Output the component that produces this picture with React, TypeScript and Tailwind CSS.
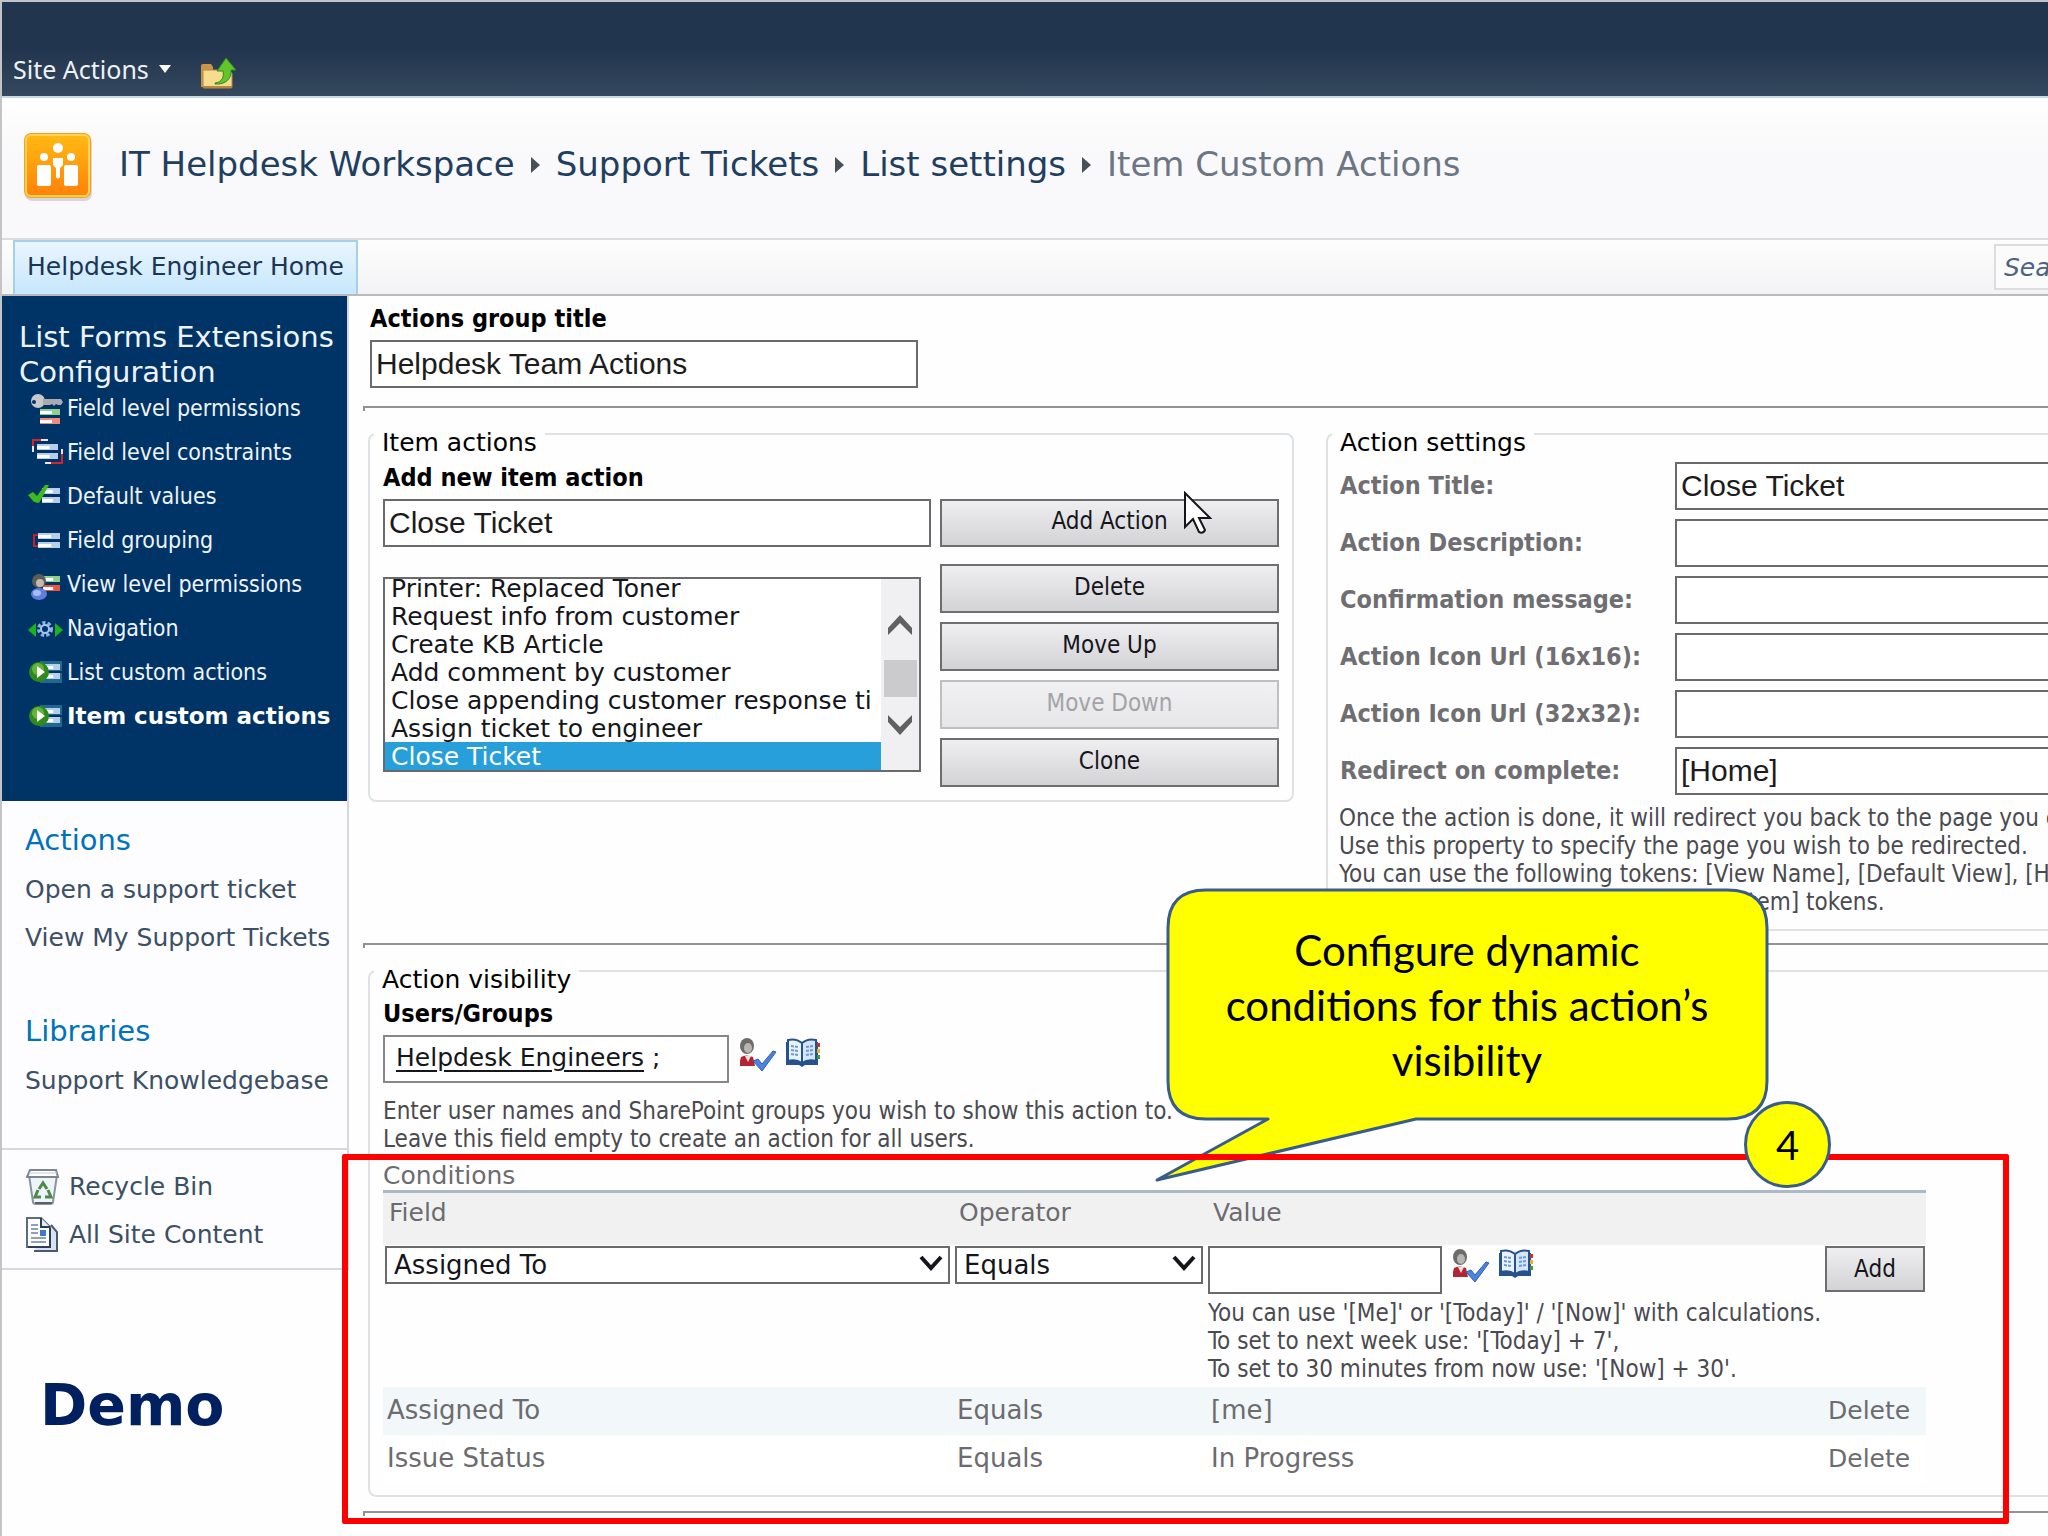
import { useEffect, useRef } from 'react';
import type { ReactNode } from 'react';

const VERDANA = "font-['DejaVu_Sans',Verdana,sans-serif]";
const TAHOMA = "font-['DejaVu_Sans_Condensed',Tahoma,'DejaVu_Sans',sans-serif]";
const ARIAL = "font-['Liberation_Sans',Arial,sans-serif]";
const CALIBRI = "font-['Lato',Calibri,sans-serif]";

const INPUT = `${ARIAL} min-w-0 h-12 border-2 border-[#6a6a6c] bg-white px-1 text-[30px] text-[#1c1c20] outline-none`;
const BUTTON = `${TAHOMA} border-2 border-[#6e6e70] bg-linear-to-b from-[#efeef0] to-[#d3d2d4] text-[24px] text-[#15151c]`;

/* ---------- icons ---------- */

const FolderUpIcon = () => (
  <svg width="38" height="34" viewBox="0 0 38 34" aria-hidden="true">
    <path d="M1 30V9q0-2 2-2h8l2 3v20z" fill="#c8964a" />
    <path d="M3 30V13h24l5 3v14q0 1-1 1H4q-1 0-1-1z" fill="#f7dc8f" stroke="#b98a3c" strokeWidth="1" />
    <path d="M3 29h29v2H3z" fill="#b9853a" />
    <path d="M15 26c8-1 9-7 8-12h-6L26 1l10 12h-5c1 8-5 15-16 14z" fill="#62c52b" stroke="#2f8a1a" strokeWidth="1" />
  </svg>
);

const SiteIcon = () => (
  <svg width="70" height="70" viewBox="0 0 70 70" aria-hidden="true">
    <defs>
      <linearGradient id="site" x1="0" y1="0" x2="0" y2="1">
        <stop offset="0" stopColor="#ffb913" />
        <stop offset="1" stopColor="#ff8209" />
      </linearGradient>
    </defs>
    <rect x="2" y="3" width="67" height="66" rx="7" fill="#d9d5d8" />
    <rect x="1" y="1" width="67" height="65" rx="7" fill="#f5a11d" />
    <rect x="3" y="3" width="63" height="61" rx="5" fill="url(#site)" stroke="#ffd257" strokeWidth="2" />
    <g fill="#fff">
      <circle cx="35" cy="16" r="5" />
      <circle cx="21" cy="25" r="4" />
      <circle cx="48" cy="25" r="4" />
      <path d="M30 26h10v7l-3 3v9q-2 3-4 0v-9l-3-3z" />
      <rect x="14" y="33" width="14" height="21" rx="2" />
      <rect x="41" y="33" width="14" height="21" rx="2" />
    </g>
  </svg>
);

const Bars = ({ x, y, w, top = '#b7cdec', bottom = '#b7cdec' }: { x: number; y: number; w: number; top?: string; bottom?: string }) => (
  <>
    <rect x={x} y={y} width={w} height="6" fill={top} />
    <rect x={x} y={y + 2} width={w * 0.6} height="3" fill="#fff" />
    <rect x={x} y={y + 9} width={w} height="6" fill={bottom} />
    <rect x={x} y={y + 11} width={w * 0.6} height="3" fill="#fff" />
  </>
);

const NavIcon = ({ children }: { children: ReactNode }) => (
  <svg width="36" height="34" viewBox="0 0 36 34" className="shrink-0" aria-hidden="true">
    {children}
  </svg>
);

const KeyIcon = () => (
  <NavIcon>
    <Bars x={12} y={18} w={20} top="#8fd08c" bottom="#f08a7c" />
    <circle cx="10" cy="10" r="7" fill="#c6c8cb" />
    <circle cx="6" cy="11" r="2" fill="#003366" />
    <path d="M15 8h18l2 3-2 3h-3l-2-1-2 2-2-2-2 1h-7z" fill="#a9abae" />
  </NavIcon>
);

const ConstraintIcon = () => (
  <NavIcon>
    <Bars x={9} y={9} w={21} />
    <path d="M5 17V5h15" fill="none" stroke="#d3262b" strokeWidth="2" />
    <path d="M5 17v-6M13 5h7" stroke="#f4dfe2" strokeWidth="2" />
    <path d="M34 14v14H17" fill="none" stroke="#d3262b" strokeWidth="2" />
    <path d="M34 14v5M17 28h6" stroke="#f4dfe2" strokeWidth="2" />
  </NavIcon>
);

const CheckBarsIcon = () => (
  <NavIcon>
    <Bars x={14} y={9} w={18} />
    <path d="M0 16l5-3 4 4 8-11h4L11 24l-5-1z" fill="#3dbb1c" />
  </NavIcon>
);

const GroupIcon = () => (
  <NavIcon>
    <path d="M10 12H6v11h4" fill="none" stroke="#c81f26" strokeWidth="2" />
    <Bars x={10} y={10} w={22} />
  </NavIcon>
);

const UserBarsIcon = () => (
  <NavIcon>
    <Bars x={15} y={9} w={17} top="#8fd08c" bottom="#f0523c" />
    <ellipse cx="11" cy="27" rx="8" ry="6" fill="#5f7fe0" />
    <ellipse cx="9" cy="26" rx="4" ry="3" fill="#a8bbf4" />
    <circle cx="11" cy="14" r="7" fill="#5c5b5a" />
    <circle cx="12" cy="16" r="4" fill="#c4b8b0" />
  </NavIcon>
);

const NavigateIcon = () => (
  <NavIcon>
    <path d="M0 19l8-7v14zM35 19l-8-7v14z" fill="#19b41c" />
    <circle cx="17" cy="18" r="6" fill="none" stroke="#8fb2e6" strokeWidth="4" strokeDasharray="3 2" />
    <circle cx="17" cy="18" r="4" fill="none" stroke="#a9c5ef" strokeWidth="2" />
  </NavIcon>
);

const PlayBarsIcon = () => (
  <NavIcon>
    <rect x="12" y="6" width="22" height="10" fill="#1f6a8c" />
    <rect x="12" y="18" width="22" height="10" fill="#1f6a8c" />
    <Bars x={15} y={9} w={17} />
    <circle cx="11" cy="17" r="10" fill="#2f8a1c" />
    <circle cx="10" cy="14" r="6" fill="#63b53a" />
    <path d="M9 11l8 6-8 6z" fill="#fff" />
  </NavIcon>
);

const RecycleIcon = () => (
  <svg width="34" height="36" viewBox="0 0 34 36" aria-hidden="true">
    <path d="M3 6l4 27q0 2 3 2h14q3 0 3-2l4-27z" fill="#eef4fa" stroke="#8b949d" strokeWidth="2" />
    <path d="M4 1h26l2 7H1z" fill="#fff" stroke="#7d868f" strokeWidth="2" />
    <path d="M3 4h28" stroke="#c3cbd2" strokeWidth="1" />
    <path d="M13 20l4-6 4 6M22 21l3 7h-6M15 28H9l3-7" fill="none" stroke="#4b8a48" strokeWidth="3" />
    <path d="M9 34h17" stroke="#59626b" strokeWidth="2" />
  </svg>
);

const SiteContentIcon = () => (
  <svg width="34" height="36" viewBox="0 0 34 36" aria-hidden="true">
    <path d="M8 34h23V15l-6-7" fill="#d7e3f2" stroke="#4a5a72" strokeWidth="2" />
    <path d="M1 1h14l9 9v20H1z" fill="#fff" stroke="#5d6b80" strokeWidth="2" />
    <path d="M15 1v9h9" fill="#e4ecf6" stroke="#2f3e55" strokeWidth="2" />
    <path d="M24 11v19H2" fill="none" stroke="#2f3e55" strokeWidth="2" />
    <path d="M5 8h7M5 12h7M5 16h7M5 21h15M5 25h15" stroke="#8fa0ba" strokeWidth="2" />
    <rect x="14" y="13" width="6" height="6" fill="#3c7ad0" />
  </svg>
);

const CheckNamesIcon = () => (
  <svg width="38" height="34" viewBox="0 0 38 34" aria-hidden="true">
    <ellipse cx="8" cy="8" rx="7" ry="8" fill="#6d6b6b" />
    <ellipse cx="9" cy="10" rx="4" ry="5" fill="#b9b5b3" />
    <path d="M2 19q5-3 12 0l2 9H1v-5z" fill="#b32434" />
    <path d="M6 18l3 6 3-6z" fill="#f0dfe0" />
    <path d="M14 23l5-2 4 5L34 13l3 1-14 19z" fill="#4c83dc" stroke="#2f5fb4" strokeWidth="1" />
  </svg>
);

const BrowseIcon = () => (
  <svg width="36" height="30" viewBox="0 0 36 30" aria-hidden="true">
    <path d="M1 4h32v23H20l-3 2-3-2H1z" fill="#27538a" />
    <path d="M32 5h3v4h-3z" fill="#c8312c" />
    <path d="M32 11h3v4h-3z" fill="#e5b32a" />
    <path d="M32 17h3v4h-3z" fill="#3f9a3c" />
    <path d="M3 2q8-2 14 3v20q-6-4-14-2z" fill="#e9f2fd" stroke="#27538a" strokeWidth="2" />
    <path d="M31 2q-8-2-14 3v20q6-4 14-2z" fill="#d5e6fa" stroke="#27538a" strokeWidth="2" />
    <path d="M6 8l7 1M6 12l7 1M6 16l7 1M21 9l7-1M21 13l7-1M21 17l7-1" stroke="#6d9ad4" strokeWidth="2" strokeDasharray="3 1" />
  </svg>
);

const Chevron = ({ className }: { className: string }) => (
  <svg width="26" height="20" viewBox="0 0 26 20" fill="currentColor" className={className} aria-hidden="true">
    <path d="M1 0l12 12L25 0v7L13 20 1 7z" />
  </svg>
);

const SelectArrow = () => (
  <svg
    width="24"
    height="18"
    viewBox="0 0 24 18"
    fill="none"
    stroke="#15151c"
    strokeWidth="4"
    className="pointer-events-none absolute top-[9px] right-[7px]"
    aria-hidden="true"
  >
    <path d="M2 2l10 11L22 2" />
  </svg>
);

const Crumb = () => (
  <svg width="9" height="18" viewBox="0 0 9 18" aria-hidden="true">
    <path d="M0 1l9 8-9 8z" fill="#46505c" />
  </svg>
);

/* ---------- data ---------- */

const configLinks = [
  { label: 'Field level permissions', icon: <KeyIcon /> },
  { label: 'Field level constraints', icon: <ConstraintIcon /> },
  { label: 'Default values', icon: <CheckBarsIcon /> },
  { label: 'Field grouping', icon: <GroupIcon /> },
  { label: 'View level permissions', icon: <UserBarsIcon /> },
  { label: 'Navigation', icon: <NavigateIcon /> },
  { label: 'List custom actions', icon: <PlayBarsIcon /> },
  { label: 'Item custom actions', icon: <PlayBarsIcon />, current: true },
];

const itemActions = [
  'Printer: Replaced Toner',
  'Request info from customer',
  'Create KB Article',
  'Add comment by customer',
  'Close appending customer response ti',
  'Assign ticket to engineer',
  'Close Ticket',
];

const settings = [
  { id: 'title', label: 'Action Title:', value: 'Close Ticket' },
  { id: 'description', label: 'Action Description:', value: '' },
  { id: 'confirm', label: 'Confirmation message:', value: '' },
  { id: 'icon16', label: 'Action Icon Url (16x16):', value: '' },
  { id: 'icon32', label: 'Action Icon Url (32x32):', value: '' },
  { id: 'redirect', label: 'Redirect on complete:', value: '[Home]' },
];

const conditions = [
  { field: 'Assigned To', operator: 'Equals', value: '[me]' },
  { field: 'Issue Status', operator: 'Equals', value: 'In Progress' },
];

/* ---------- building blocks ---------- */

const Divider = () => <div className="h-[5px] border-t-2 border-l-2 border-[#929294]" />;

// the legend is padded on top so that the border runs above the middle of its text
const Group = ({ title, className, children }: { title: string; className: string; children: ReactNode }) => (
  <fieldset className={`min-w-0 rounded-lg border-2 border-[#dfe2e5] ${className}`}>
    <legend className={`${VERDANA} ml-1 px-2 pt-[18px] text-[25px] leading-7 text-black`}>{title}</legend>
    {children}
  </fieldset>
);

const Dropdown = ({ label, value }: { label: string; value: string }) => (
  <div className="relative">
    <select
      aria-label={label}
      defaultValue={value}
      className={`${VERDANA} block h-[38px] w-full appearance-none border-2 border-[#6a6a6c] bg-white px-[7px] text-[26px] leading-[34px] text-[#15151c] outline-none`}
    >
      <option>{value}</option>
    </select>
    <SelectArrow />
  </div>
);

const PeopleButtons = () => (
  <div className="flex items-start gap-2 pt-[3px] pl-[2px]">
    <button type="button" aria-label="Check names"><CheckNamesIcon /></button>
    <button type="button" aria-label="Browse"><BrowseIcon /></button>
  </div>
);

const ActionList = () => {
  const ref = useRef<HTMLSelectElement>(null);

  useEffect(() => {
    if (ref.current) ref.current.scrollTop = ref.current.scrollHeight;
  }, []);

  return (
    <div className="flex h-[195px] w-[538px] border-2 border-[#6a6a6c] bg-white">
      <select
        ref={ref}
        size={7}
        aria-label="Item actions"
        defaultValue="Close Ticket"
        className={`${VERDANA} h-full min-w-0 flex-1 overflow-y-scroll bg-white text-[25px] text-[#15151c] outline-none [scrollbar-width:none]`}
      >
        {itemActions.map((action) => (
          <option
            key={action}
            className="h-7 min-h-0 overflow-hidden px-[6px] py-0 leading-7 whitespace-nowrap checked:bg-linear-to-r checked:from-[#269fdb] checked:to-[#269fdb] checked:[-webkit-text-fill-color:#fff]"
          >
            {action}
          </option>
        ))}
      </select>
      <div className="flex w-[38px] flex-col items-center bg-[#f0eff1] pt-[36px] text-[#606062]">
        <Chevron className="rotate-180" />
        <div className="mt-[25px] h-[37px] w-[33px] bg-[#cbcacc]" />
        <Chevron className="mt-[18px]" />
      </div>
    </div>
  );
};

const Sidebar = () => (
  <aside className="w-[347px] shrink-0">
    <div className="border-r-2 border-[#d8d8dc] bg-[#fdfcfe]">
      <nav className="h-[505px] bg-[#003366] pt-6 text-[#eef3f8]">
        <h2 className={`${VERDANA} pl-[17px] text-[29px] leading-[35px] whitespace-nowrap`}>
          List Forms Extensions
          <br />
          Configuration
        </h2>
        <ul className="-mt-1">
          {configLinks.map(({ label, icon, current }) => (
            <li key={label}>
              <a
                href="#"
                className={`flex h-11 items-center gap-[3px] pl-[26px] text-[23px] whitespace-nowrap ${current ? `${VERDANA} font-bold text-white` : TAHOMA}`}
              >
                {icon}
                {label}
              </a>
            </li>
          ))}
        </ul>
      </nav>
      <nav className={`${VERDANA} h-[349px] border-b-2 border-[#d8d8dc] pt-5 pl-[23px] text-[25px] whitespace-nowrap text-[#3b4f65]`}>
        <h2 className="text-[29px] leading-[38px] text-[#0072bc]">Actions</h2>
        <a href="#" className="mt-[7px] block leading-[48px]">Open a support ticket</a>
        <a href="#" className="block leading-[48px]">View My Support Tickets</a>
        <h2 className="mt-[50px] text-[29px] leading-[38px] text-[#0072bc]">Libraries</h2>
        <a href="#" className="mt-[7px] block leading-[48px]">Support Knowledgebase</a>
      </nav>
      <nav className={`${VERDANA} h-[120px] border-b-2 border-[#d8d8dc] pt-[13px] pl-6 text-[25px] whitespace-nowrap text-[#3b4f65]`}>
        <a href="#" className="flex h-12 items-center gap-[9px]"><RecycleIcon />Recycle Bin</a>
        <a href="#" className="flex h-12 items-center gap-[9px]"><SiteContentIcon />All Site Content</a>
      </nav>
    </div>
    <p className={`${VERDANA} mt-[100px] pl-[38px] text-[57px] leading-[70px] font-bold text-[#002060]`}>Demo</p>
  </aside>
);

const ConditionsTable = () => (
  <table className={`${VERDANA} w-[1543px] table-fixed border-collapse text-left text-[26px] text-[#6c6c70]`}>
    <colgroup>
      <col className="w-[571px]" />
      <col className="w-[253px]" />
      <col />
      <col className="w-[102px]" />
    </colgroup>
    <thead>
      <tr className="h-[53px] border-t-3 border-[#adbac6] bg-[#f1f1f2] align-top">
        <th className="pt-1 pl-[6px] text-[25px] leading-8 font-normal">Field</th>
        <th className="pt-1 pl-[5px] text-[25px] leading-8 font-normal">Operator</th>
        <th className="pt-1 pl-[6px] text-[25px] leading-8 font-normal">Value</th>
        <th aria-label="Commands" />
      </tr>
    </thead>
    <tbody>
      <tr className="h-[142px] align-top">
        <td className="pt-px pr-1 pl-[2px]"><Dropdown label="Field" value="Assigned To" /></td>
        <td className="pt-px pr-1 pl-px"><Dropdown label="Operator" value="Equals" /></td>
        <td className="pt-px pl-px">
          <div className="flex items-start gap-2">
            <input aria-label="Value" className={`${INPUT} w-[234px]`} />
            <PeopleButtons />
          </div>
          <p className={`${TAHOMA} mt-[5px] text-[24px] leading-7 whitespace-nowrap text-[#4a4a50]`}>
            You can use '[Me]' or '[Today]' / '[Now]' with calculations.
            <br />
            To set to next week use: '[Today] + 7',
            <br />
            To set to 30 minutes from now use: '[Now] + 30'.
          </p>
        </td>
        <td className="pt-px pr-px pl-px">
          <button type="button" className={`${BUTTON} h-[46px] w-full`}>Add</button>
        </td>
      </tr>
      {conditions.map(({ field, operator, value }) => (
        <tr key={field} className="h-12 odd:bg-white even:bg-[#f2f7f9]">
          <td className="pl-1">{field}</td>
          <td className="pl-[3px]">{operator}</td>
          <td className="pl-1">{value}</td>
          <td className="pl-1 text-[25px]"><a href="#">Delete</a></td>
        </tr>
      ))}
    </tbody>
  </table>
);

const Callout = () => (
  <div className="absolute top-[885px] left-[1152px] h-[298px] w-[616px]">
    <svg viewBox="0 0 616 298" className="absolute inset-0 size-full" aria-hidden="true">
      <path
        d="M52 3H573q40 0 40 38V194q0 38-40 38H262L3 293 114 232H52q-38 0-38-38V41Q14 3 52 3z"
        fill="#ffff00"
        stroke="#385d8a"
        strokeWidth="3"
        strokeLinejoin="round"
      />
    </svg>
    <p className={`${CALIBRI} relative pt-9 pl-[10px] text-center text-[42px] leading-[55px] text-black`}>
      Configure dynamic
      <br />
      conditions for this action’s
      <br />
      visibility
    </p>
  </div>
);

const Pointer = () => (
  <svg width="28" height="44" viewBox="0 0 28 44" className="absolute top-[489px] left-[1182px]" aria-hidden="true">
    <path d="M1 2v34l8-8 6 13q4 2 6-2l-6-12h11z" fill="#fff" stroke="#15151c" strokeWidth="2" />
  </svg>
);

export default function App() {
  return (
    <div className="relative min-h-screen w-full overflow-hidden border-t-2 border-l-2 border-[#c4c4c6] bg-[#fefefe]">
      <div className="flex h-24 items-end gap-6 border-b-2 border-[#c5d8e6] bg-linear-to-b from-[#22354e] from-50% to-[#34485e] pb-[5px] pl-[11px]">
        <button type="button" className="flex items-center gap-[10px] pb-1 font-['Noto_Sans',sans-serif] text-[25px] leading-9 text-[#eef1f5]">
          Site Actions
          <svg width="12" height="8" viewBox="0 0 12 8" aria-hidden="true"><path d="M0 0h12L6 8z" fill="#fff" /></svg>
        </button>
        <a href="#" aria-label="Navigate up" className="pl-[5px]"><FolderUpIcon /></a>
      </div>

      <header className="flex h-[142px] items-center gap-[26px] border-b-2 border-[#dcdbde] bg-linear-to-b from-white to-[#f9f8fa] to-40% pb-[3px] pl-[21px]">
        <SiteIcon />
        <nav className={`${VERDANA} flex items-center gap-4 pb-1 text-[34px] whitespace-nowrap text-[#1f3f61]`}>
          <a href="#">IT Helpdesk Workspace</a>
          <Crumb />
          <a href="#">Support Tickets</a>
          <Crumb />
          <a href="#">List settings</a>
          <Crumb />
          <span className="text-[#6b7684]">Item Custom Actions</span>
        </nav>
      </header>

      <div className="flex h-14 justify-between border-b-2 border-[#bab9bc] bg-linear-to-b from-[#fdfdfd] to-[#f3f3f5] pl-[11px]">
        <a
          href="#"
          className={`${VERDANA} flex items-center border-x-2 border-t-2 border-[#a5d0e8] bg-linear-to-b from-[#e9f5fe] to-[#c6e7fd] px-3 pb-[2px] text-[25px] text-[#1b3655]`}
        >
          Helpdesk Engineer Home
        </a>
        <input
          aria-label="Search"
          placeholder="Search this site..."
          className={`${VERDANA} mt-1 h-[46px] w-[54px] border-2 border-r-0 border-[#dddcdf] bg-[#fbfbfc] pl-2 text-[25px] italic outline-none placeholder:text-[#4a6482]`}
        />
      </div>

      <div className="flex">
        <Sidebar />

        <main className={`${TAHOMA} min-w-0 flex-1 pl-[14px] text-[25px]`}>
          <div className="h-[110px] pt-2 pl-[7px]">
            <label htmlFor="group-title" className="block leading-[30px] font-bold text-black">Actions group title</label>
            <input id="group-title" defaultValue="Helpdesk Team Actions" className={`${INPUT} mt-[6px] block w-[548px]`} />
          </div>
          <Divider />

          <div className="flex items-start gap-8 pl-[5px]">
            <Group title="Item actions" className="h-[391px] w-[926px] shrink-0">
              <div className="pt-[7px] pl-[13px]">
                <label htmlFor="new-action" className="block leading-7 font-bold text-black">Add new item action</label>
                <div className="mt-[7px] flex gap-[9px]">
                  <input id="new-action" defaultValue="Close Ticket" className={`${INPUT} w-[548px]`} />
                  <button type="button" className={`${BUTTON} h-12 w-[339px] pb-1`}>Add Action</button>
                </div>
                <div className="mt-[17px] flex gap-[19px]">
                  <div className="pt-[13px]"><ActionList /></div>
                  <div className="flex w-[339px] flex-col gap-[9px]">
                    <button type="button" className={`${BUTTON} h-[49px] pb-1`}>Delete</button>
                    <button type="button" className={`${BUTTON} h-[49px] pb-1`}>Move Up</button>
                    <button
                      type="button"
                      disabled
                      className={`${TAHOMA} h-[49px] border-2 border-[#bfbec1] bg-linear-to-b from-[#f1f0f2] to-[#e6e5e7] pb-1 text-[24px] text-[#a3a3a6]`}
                    >
                      Move Down
                    </button>
                    <button type="button" className={`${BUTTON} h-[49px] pb-1`}>Clone</button>
                  </div>
                </div>
              </div>
            </Group>

            <Group title="Action settings" className="-mr-4 h-[520px] flex-1">
              <div className="flex flex-col gap-[9px] pt-[5px] pl-3">
                {settings.map(({ id, label, value }) => (
                  <div key={id} className="flex">
                    <label htmlFor={id} className="w-[335px] shrink-0 leading-[48px] font-bold text-[#6f6f73]">{label}</label>
                    <input id={id} defaultValue={value} className={`${INPUT} flex-1`} />
                  </div>
                ))}
              </div>
              <p className="overflow-hidden pt-[9px] pl-[11px] text-[24px] leading-7 whitespace-nowrap text-[#4a4a50]">
                Once the action is done, it will redirect you back to the page you came from.
                <br />
                Use this property to specify the page you wish to be redirected.
                <br />
                You can use the following tokens: [View Name], [Default View], [Home]
                <br />
                or [Display Item], [Edit Item] &amp; [New Item] tokens.
              </p>
            </Group>
          </div>

          <div className="pt-3"><Divider /></div>

          <div className="pl-[5px]">
            <Group title="Action visibility" className="-mr-4 h-[549px]">
              <div className="pt-[5px] pl-[13px]">
                <p id="users-label" className="leading-[30px] font-bold text-black">Users/Groups</p>
                <div className="mt-[6px] flex items-start gap-2">
                  <div
                    role="textbox"
                    aria-labelledby="users-label"
                    tabIndex={0}
                    className={`${VERDANA} h-12 w-[346px] border-2 border-[#87878a] bg-white pl-[11px] leading-[42px] text-[#15151c]`}
                  >
                    <span className="underline decoration-2 underline-offset-4">Helpdesk Engineers</span> ;
                  </div>
                  <PeopleButtons />
                </div>
                <p className="mt-[14px] text-[24px] leading-7 whitespace-nowrap text-[#4a4a50]">
                  Enter user names and SharePoint groups you wish to show this action to.
                  <br />
                  Leave this field empty to create an action for all users.
                </p>
                <h3 className={`${VERDANA} mt-[9px] leading-[28px] text-[#6c6c70]`}>Conditions</h3>
                <ConditionsTable />
              </div>
            </Group>
          </div>

          <div className="pt-[14px] pb-4"><Divider /></div>
        </main>
      </div>

      <Callout />
      <div className="pointer-events-none absolute top-[1152px] left-[340px] h-[370px] w-[1667px] rounded-[2px] border-6 border-[#ff0000]" />
      <div className={`${CALIBRI} absolute top-[1099px] left-[1742px] flex size-[87px] items-center justify-center rounded-full border-3 border-[#385d8a] bg-[#ffff00] text-[40px] text-black`}>
        4
      </div>
      <Pointer />
    </div>
  );
}
